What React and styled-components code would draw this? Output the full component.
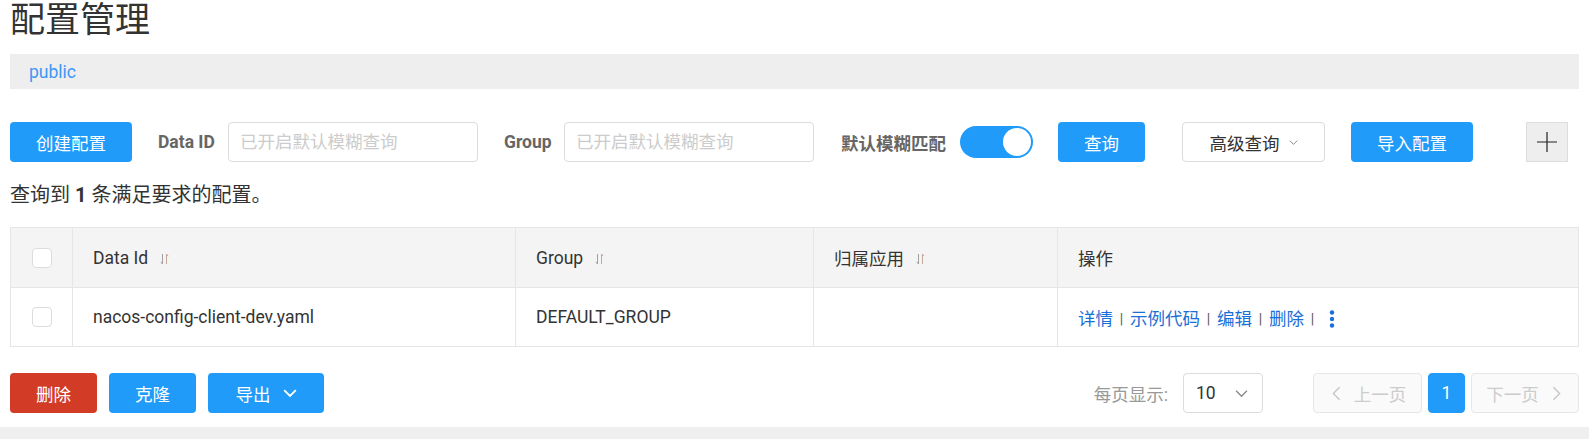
// Dependencies
import React from 'react';
import styled, { createGlobalStyle } from 'styled-components';

// ============= Data ==============

const rows = [
    { dataId: 'nacos-config-client-dev.yaml', group: 'DEFAULT_GROUP', appName: '' },
];

const PRIMARY = '#209bfa';

// ============= Icons ==============

const SortIcon = () => (
    <svg width="9" height="12" viewBox="0 0 9 12" fill="none" stroke="#a0a0a0" strokeWidth="1">
        <path d="M2.5 1v10M0.8 8.8l1.7 2.2" />
        <path d="M6.5 11V1M6.5 1l1.7 2.2" stroke="#c8a79b" />
    </svg>
);

const Chevron = ({ size = 12, color = '#999', dir = 'down', weight = 1.2 }) => {
    const paths = {
        down: 'M1 3.5l5 5 5-5',
        left: 'M8.5 1L3.5 6l5 5',
        right: 'M3.5 1l5 5-5 5',
    };
    return (
        <svg width={size} height={size} viewBox="0 0 12 12" fill="none" stroke={color} strokeWidth={weight}>
            <path d={paths[dir]} />
        </svg>
    );
};

const PlusIcon = () => (
    <svg width="22" height="22" viewBox="0 0 22 22" stroke="#222" strokeWidth="1.2">
        <path d="M11 1v20M1 11h20" />
    </svg>
);

const MoreIcon = () => (
    <svg width="6" height="20" viewBox="0 0 6 20" fill="#1a6fd8">
        <circle cx="3" cy="3.5" r="2.2" />
        <circle cx="3" cy="10" r="2.2" />
        <circle cx="3" cy="16.5" r="2.2" />
    </svg>
);

// ============= Component ==============

export default function App() {
    return (
        <>
            <GlobalStyle />
            <Page>
                <Content>
                    <Title>配置管理</Title>
                    <NamespaceBar>
                        <NamespaceLink>public</NamespaceLink>
                    </NamespaceBar>

                    <Toolbar>
                        <Button w={122} mr={26}>创建配置</Button>
                        <Label w={54} mr={16}>Data ID</Label>
                        <Input mr={26} placeholder="已开启默认模糊查询" />
                        <Label w={45} mr={15}>Group</Label>
                        <Input mr={27} placeholder="已开启默认模糊查询" />
                        <Label w={104} mr={15}>默认模糊匹配</Label>
                        <Switch mr={25}>
                            <SwitchKnob />
                        </Switch>
                        <Button w={87} mr={37}>查询</Button>
                        <SelectButton w={143} mr={26}>
                            高级查询
                            <Chevron size={9} color="#888" weight={1.3} />
                        </SelectButton>
                        <Button w={122} mr={53}>导入配置</Button>
                        <PlusButton>
                            <PlusIcon />
                        </PlusButton>
                    </Toolbar>

                    <ResultText>
                        查询到 <strong>1</strong> 条满足要求的配置。
                    </ResultText>

                    <Table>
                        <HeadCell center><Checkbox /></HeadCell>
                        <HeadCell>Data Id<SortWrap><SortIcon /></SortWrap></HeadCell>
                        <HeadCell>Group<SortWrap><SortIcon /></SortWrap></HeadCell>
                        <HeadCell>归属应用<SortWrap><SortIcon /></SortWrap></HeadCell>
                        <HeadCell>操作</HeadCell>
                        {rows.map((row) => (
                            <React.Fragment key={row.dataId}>
                                <BodyCell center><Checkbox /></BodyCell>
                                <BodyCell>{row.dataId}</BodyCell>
                                <BodyCell>{row.group}</BodyCell>
                                <BodyCell>{row.appName}</BodyCell>
                                <BodyCell>
                                    <ActionLink>详情</ActionLink>
                                    <Separator>|</Separator>
                                    <ActionLink>示例代码</ActionLink>
                                    <Separator>|</Separator>
                                    <ActionLink>编辑</ActionLink>
                                    <Separator>|</Separator>
                                    <ActionLink>删除</ActionLink>
                                    <Separator>|</Separator>
                                    <MoreWrap><MoreIcon /></MoreWrap>
                                </BodyCell>
                            </React.Fragment>
                        ))}
                    </Table>

                    <Footer>
                        <FooterActions>
                            <Button w={87} danger>删除</Button>
                            <Button w={87}>克隆</Button>
                            <Button w={116}>
                                导出
                                <ChevronGap><Chevron size={14} color="#fff" weight={1.6} /></ChevronGap>
                            </Button>
                        </FooterActions>
                        <Pagination>
                            <PageSizeLabel>每页显示:</PageSizeLabel>
                            <PageSizeSelect>
                                10
                                <Chevron size={13} color="#888" />
                            </PageSizeSelect>
                            <PageButton w={109} disabled mr={6}>
                                <Chevron size={15} color="#c8c8c8" dir="left" />
                                上一页
                            </PageButton>
                            <PageButton w={37} active mr={6}>1</PageButton>
                            <PageButton w={108} disabled>
                                下一页
                                <Chevron size={15} color="#c8c8c8" dir="right" />
                            </PageButton>
                        </Pagination>
                    </Footer>
                </Content>
                <BottomBand />
            </Page>
        </>
    );
}

// ============= Styled Components ==============

const GlobalStyle = createGlobalStyle`
    html, body {
        margin: 0;
        padding: 0;
        overflow: hidden;
        background: #fff;
    }
    body {
        font-family: Roboto, "Noto Sans CJK SC", sans-serif;
        font-size: 17.5px;
        color: #333;
    }
    * {
        box-sizing: border-box;
    }
`;

const Page = styled.div`
    display: flex;
    flex-direction: column;
    height: 439px;
`;

const Content = styled.div`
    padding: 0 10px;
`;

const Title = styled.h1`
    margin: 0;
    font-size: 35px;
    font-weight: 400;
    line-height: 42px;
    color: #333;
`;

const NamespaceBar = styled.div`
    margin-top: 12px;
    height: 35px;
    display: flex;
    align-items: center;
    padding-left: 19px;
    background: #eee;
`;

const NamespaceLink = styled.span`
    color: #3d98f5;
    font-size: 17.5px;
`;

const Toolbar = styled.div`
    margin-top: 33px;
    height: 40px;
    display: flex;
    align-items: center;
`;

const Button = styled.button`
    width: ${props => props.w}px;
    height: 40px;
    margin-right: ${props => props.mr || 0}px;
    display: inline-flex;
    align-items: center;
    justify-content: center;
    border: none;
    border-radius: 4px;
    background: ${props => props.danger ? '#d23c26' : PRIMARY};
    color: #fff;
    font-family: inherit;
    font-size: 17.5px;
    padding: 0;
    flex-shrink: 0;
`;

const ChevronGap = styled.span`
    display: inline-flex;
    margin-left: 12px;
`;

const Label = styled.span`
    width: ${props => props.w}px;
    margin-right: ${props => props.mr}px;
    font-weight: 700;
    color: #666;
    white-space: nowrap;
    flex-shrink: 0;
`;

const Input = styled.input`
    width: 250px;
    height: 40px;
    margin-right: ${props => props.mr}px;
    padding: 0 11px;
    border: 1px solid #dcdcdc;
    border-radius: 4px;
    font-family: inherit;
    font-size: 17.5px;
    color: #333;
    flex-shrink: 0;

    &::placeholder {
        color: #ccc;
    }
`;

const Switch = styled.div`
    width: 73px;
    height: 32px;
    margin-right: ${props => props.mr}px;
    border-radius: 16px;
    background: ${PRIMARY};
    display: flex;
    align-items: center;
    justify-content: flex-end;
    padding-right: 2px;
    flex-shrink: 0;
`;

const SwitchKnob = styled.div`
    width: 28px;
    height: 28px;
    border-radius: 50%;
    background: #fff;
`;

const SelectButton = styled.div`
    width: ${props => props.w}px;
    height: 40px;
    margin-right: ${props => props.mr}px;
    display: flex;
    align-items: center;
    justify-content: center;
    gap: 9px;
    border: 1px solid #dcdcdc;
    border-radius: 4px;
    background: #fff;
    color: #333;
    flex-shrink: 0;
`;

const PlusButton = styled.div`
    width: 42px;
    height: 40px;
    display: flex;
    align-items: center;
    justify-content: center;
    background: #eee;
    border: 1px solid #ddd;
    flex-shrink: 0;
`;

const ResultText = styled.div`
    margin-top: 20px;
    line-height: 26px;
    font-size: 20px;
    color: #333;

    strong {
        font-weight: 700;
    }
`;

const Table = styled.div`
    margin-top: 19px;
    display: grid;
    grid-template-columns: 62px 443px 298px 244px 1fr;
    border-top: 1px solid #e6e6e6;
    border-left: 1px solid #e6e6e6;
`;

const Cell = styled.div`
    display: flex;
    align-items: center;
    justify-content: ${props => props.center ? 'center' : 'flex-start'};
    padding: ${props => props.center ? '0' : '0 20px'};
    border-right: 1px solid #e6e6e6;
    border-bottom: 1px solid #e6e6e6;
    white-space: nowrap;
`;

const HeadCell = styled(Cell)`
    height: 60px;
    background: #f4f4f4;
    color: #333;
`;

const BodyCell = styled(Cell)`
    height: 59px;
    background: #fff;
`;

const SortWrap = styled.span`
    display: inline-flex;
    margin-left: 12px;
    margin-top: 3px;
`;

const Checkbox = styled.span`
    width: 20px;
    height: 20px;
    border: 1px solid #dcdcdc;
    border-radius: 4px;
    background: #fff;
`;

const ActionLink = styled.a`
    color: #1a6fd8;
    cursor: pointer;
`;

const Separator = styled.span`
    display: inline-block;
    width: 17px;
    text-align: center;
    color: #555;
    font-size: 14px;
    margin-top: 4px;
`;

const MoreWrap = styled.span`
    display: inline-flex;
    margin-left: 8px;
    margin-top: 3px;
`;

const Footer = styled.div`
    margin-top: 26px;
    height: 40px;
    display: flex;
    align-items: center;
    justify-content: space-between;
`;

const FooterActions = styled.div`
    display: flex;
    gap: 12px;
`;

const Pagination = styled.div`
    display: flex;
    align-items: center;
`;

const PageSizeLabel = styled.span`
    color: #999;
    margin-right: 15px;
`;

const PageSizeSelect = styled.div`
    width: 80px;
    height: 40px;
    margin-right: 50px;
    display: flex;
    align-items: center;
    justify-content: space-between;
    padding: 0 14px 0 12px;
    border: 1px solid #dcdcdc;
    border-radius: 4px;
    color: #333;
`;

const PageButton = styled.div`
    width: ${props => props.w}px;
    height: 40px;
    margin-right: ${props => props.mr || 0}px;
    display: flex;
    align-items: center;
    justify-content: center;
    gap: 10px;
    border: 1px solid ${props => props.active ? PRIMARY : '#e6e6e6'};
    border-radius: 4px;
    background: ${props => props.active ? PRIMARY : '#fafafa'};
    color: ${props => props.active ? '#fff' : '#ccc'};
`;

const BottomBand = styled.div`
    margin-top: 14px;
    flex: 1;
    background: #efefef;
`;
